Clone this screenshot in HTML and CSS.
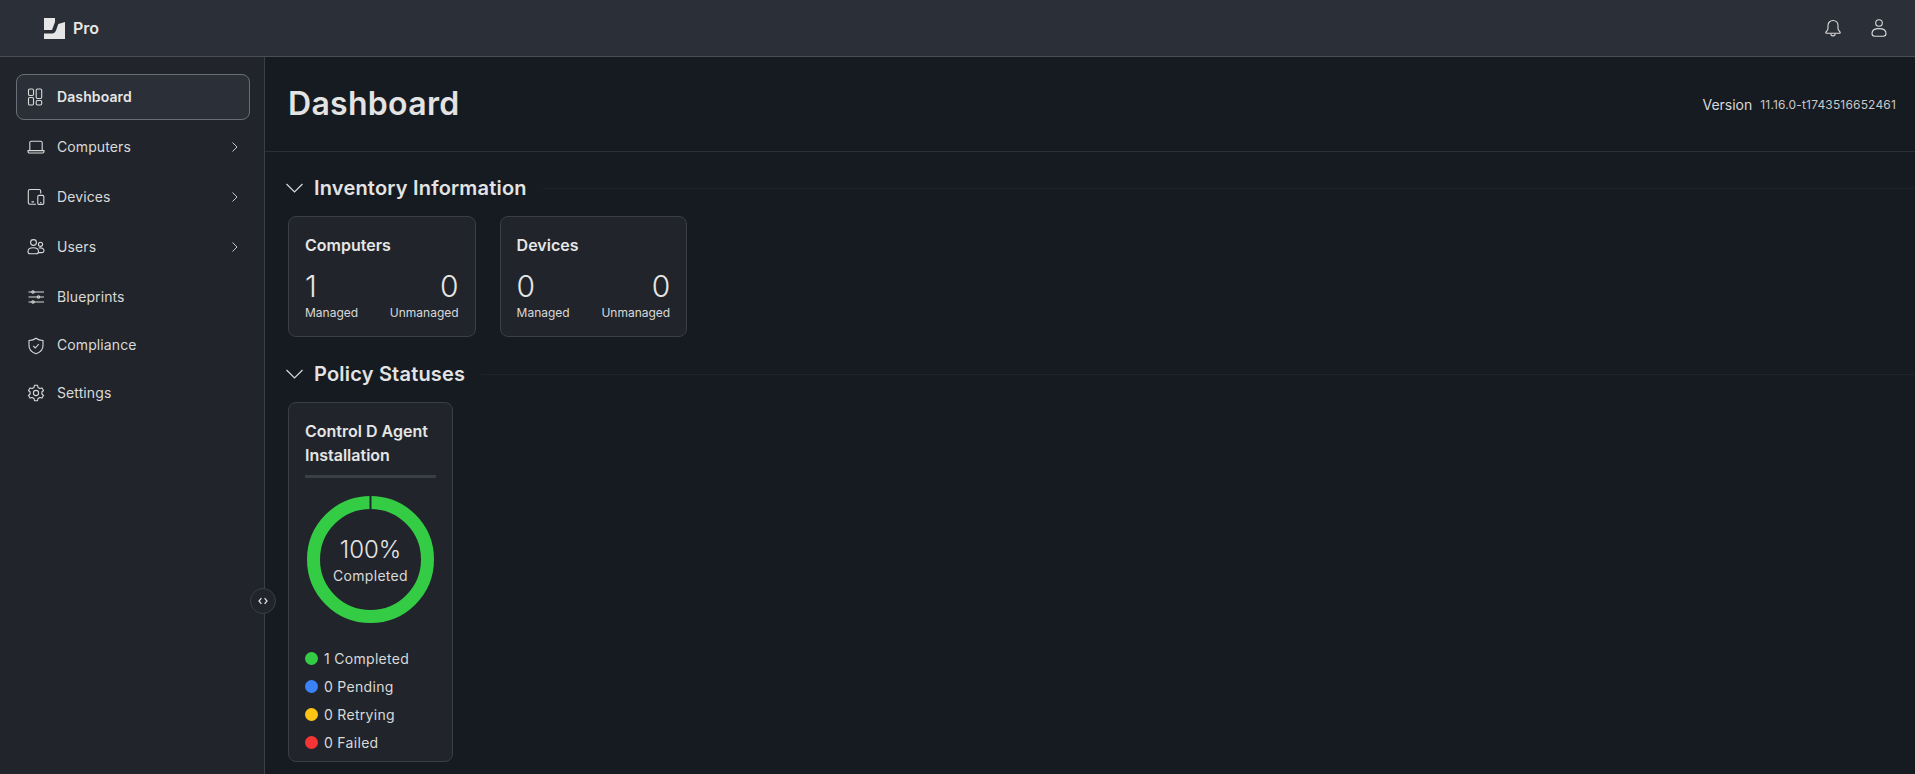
FILE: index.html
```html
<!DOCTYPE html>
<html lang="en">
<head>
    <meta charset="UTF-8">
    <meta name="viewport" content="width=device-width, initial-scale=1.0">
    <title>Dashboard</title>
    <link rel="stylesheet" href="styles.css">
</head>
<body>
    <header class="topbar">
        <div class="brand">
            <svg class="brand-logo" viewBox="0 0 21 21">
                <path d="M0 0H11V4L8 12H0Z" fill="#e6e6e6"/>
                <path d="M21 4V21H0V15.5H8C10 15.5 11 14.5 12 12.5L14.3 6Z" fill="#e6e6e6"/>
            </svg>
            <span>Pro</span>
        </div>
        <div class="topbar-actions">
            <svg class="icon" viewBox="0 0 20 20"><path d="M10 2.5C7 2.5 5 4.8 5 7.6V10.5C5 12.3 3.2 13.2 2.8 14.4 2.7 15 3 15.3 3.6 15.3H16.4C17 15.3 17.3 15 17.2 14.4 16.8 13.2 15 12.3 15 10.5V7.6C15 4.8 13 2.5 10 2.5Z"/><path d="M7.8 15.5C7.8 17 8.8 17.9 10 17.9S12.2 17 12.2 15.5"/></svg>
            <svg class="icon" viewBox="0 0 20 20"><circle cx="10" cy="5" r="3.3"/><path d="M3 15.5C3 12.2 6 10.6 10 10.6S17 12.2 17 15.5C17 17.2 16 18.2 14.3 18.2H5.7C4 18.2 3 17.2 3 15.5Z"/></svg>
        </div>
    </header>
    <div class="layout">
        <aside class="sidebar">
            <nav class="nav">
                <a class="nav-item active">
                    <svg class="icon" viewBox="0 0 18 18"><rect x="1.5" y="1" width="5" height="6.5" rx="1.2"/><rect x="1.5" y="9.5" width="5" height="7.5" rx="1.2"/><rect x="9.2" y="1" width="5.5" height="9.5" rx="1.2"/><rect x="9.2" y="12.5" width="5.5" height="4.5" rx="1.2"/></svg>
                    <span>Dashboard</span>
                </a>
                <a class="nav-item">
                    <svg class="icon" viewBox="0 0 18 18"><path d="M2.8 12.5V4.8C2.8 3.9 3.4 3.3 4.3 3.3H13.7C14.6 3.3 15.2 3.9 15.2 4.8V12.5"/><path d="M1 12.6H17V13.6C17 14.4 16.4 15 15.6 15H2.4C1.6 15 1 14.4 1 13.6Z"/></svg>
                    <span>Computers</span>
                    <svg class="chevron" viewBox="0 0 8 12"><path d="M1.5 1.5L6 6L1.5 10.5"/></svg>
                </a>
                <a class="nav-item">
                    <svg class="icon" viewBox="0 0 18 18"><path d="M9 16.2H3C2 16.2 1.3 15.5 1.3 14.5V3.2C1.3 2.2 2 1.5 3 1.5H12C13 1.5 13.7 2.2 13.7 3.2V5.5"/><rect x="10.8" y="7.4" width="6" height="9" rx="1.2"/><path d="M13.2 14.6H14.4M4.5 13.9H7"/></svg>
                    <span>Devices</span>
                    <svg class="chevron" viewBox="0 0 8 12"><path d="M1.5 1.5L6 6L1.5 10.5"/></svg>
                </a>
                <a class="nav-item">
                    <svg class="icon" viewBox="0 0 18 18"><circle cx="6.5" cy="4.5" r="2.9"/><circle cx="13.5" cy="6.3" r="2.1"/><path d="M1 13.5C1 11 3.2 9.8 6.2 9.8S11.5 11 11.5 13.5C11.5 15 10.6 15.8 9.2 15.8H3.2C1.8 15.8 1 15 1 13.5Z"/><path d="M11.8 10C14.6 9.5 17 10.5 17 12.8C17 13.9 16.3 14.6 15.2 14.6H11.6"/></svg>
                    <span>Users</span>
                    <svg class="chevron" viewBox="0 0 8 12"><path d="M1.5 1.5L6 6L1.5 10.5"/></svg>
                </a>
                <a class="nav-item">
                    <svg class="icon" viewBox="0 0 18 18"><path d="M1.5 4H17M1.5 9H17M1.5 14H17"/><circle cx="6" cy="4" r="1.2"/><circle cx="11.5" cy="9" r="1.2"/><circle cx="6" cy="14" r="1.2"/></svg>
                    <span>Blueprints</span>
                </a>
                <a class="nav-item short">
                    <svg class="icon" viewBox="0 0 18 18"><path d="M9 1.2C11 2.8 13.2 3.4 16 3.5V8.5C16 12.5 13 15.5 9 16.8C5 15.5 2 12.5 2 8.5V3.5C4.8 3.4 7 2.8 9 1.2Z"/><path d="M6.3 9L8.3 11L11.8 7"/></svg>
                    <span>Compliance</span>
                </a>
                <a class="nav-item short">
                    <svg class="icon" viewBox="0 0 18 18"><circle cx="9" cy="9" r="2.6"/><path d="M7.5 1.3H10.5L11 3.5 12.9 4.6 15 3.9 16.5 6.5 14.9 8V10L16.5 11.5 15 14.1 12.9 13.4 11 14.5 10.5 16.7H7.5L7 14.5 5.1 13.4 3 14.1 1.5 11.5 3.1 10V8L1.5 6.5 3 3.9 5.1 4.6 7 3.5Z" stroke-linejoin="round"/></svg>
                    <span>Settings</span>
                </a>
            </nav>
            <button class="collapse-btn">
                <svg viewBox="0 0 12 10"><path d="M4 1.5L1 5L4 8.5M8 1.5L11 5L8 8.5"/></svg>
            </button>
        </aside>
        <main class="content">
            <div class="page-head">
                <h1>Dashboard</h1>
                <div class="version"><span>Version</span><small>11.16.0-t1743516652461</small></div>
            </div>
            <section class="section">
                <div class="section-head">
                    <svg class="section-toggle" viewBox="0 0 18 10"><path d="M0.5 1L8.5 9L16.5 1"/></svg>
                    <h2>Inventory Information</h2>
                    <div class="section-line"></div>
                </div>
                <div class="cards">
                    <div class="card stat-card">
                        <h3>Computers</h3>
                        <div class="stat-row">
                            <div class="stat"><b>1</b><span>Managed</span></div>
                            <div class="stat right"><b>0</b><span>Unmanaged</span></div>
                        </div>
                    </div>
                    <div class="card stat-card">
                        <h3>Devices</h3>
                        <div class="stat-row">
                            <div class="stat"><b>0</b><span>Managed</span></div>
                            <div class="stat right"><b>0</b><span>Unmanaged</span></div>
                        </div>
                    </div>
                </div>
            </section>
            <section class="section">
                <div class="section-head">
                    <svg class="section-toggle" viewBox="0 0 18 10"><path d="M0.5 1L8.5 9L16.5 1"/></svg>
                    <h2>Policy Statuses</h2>
                    <div class="section-line"></div>
                </div>
                <div class="card policy-card">
                    <h3>Control D Agent Installation</h3>
                    <div class="progress-bar"></div>
                    <div class="donut">
                        <svg viewBox="0 0 127 127">
                            <circle cx="63.5" cy="63.5" r="57" fill="none" stroke="#34cc45" stroke-width="13"/>
                            <rect x="62.5" y="0" width="2" height="13" fill="#21252b"/>
                        </svg>
                        <div class="donut-label"><b>100%</b><span>Completed</span></div>
                    </div>
                    <ul class="legend">
                        <li><i class="dot green"></i>1 Completed</li>
                        <li><i class="dot blue"></i>0 Pending</li>
                        <li><i class="dot yellow"></i>0 Retrying</li>
                        <li><i class="dot red"></i>0 Failed</li>
                    </ul>
                </div>
            </section>
        </main>
    </div>
</body>
</html>
```
FILE: styles.css
```css
* {
    box-sizing: border-box;
}
html, body {
    height: 100%;
}
body {
    margin: 0;
    height: 774px;
    overflow: hidden;
    font-family: Inter, "Noto Sans", sans-serif;
    background-color: #161a21;
    color: #e6e6e6;
    font-size: 14px;
}
svg {
    display: block;
}
.icon {
    width: 18px;
    height: 18px;
    flex-shrink: 0;
    fill: none;
    stroke: #d9d9d9;
    stroke-width: 1.1;
}
.topbar {
    height: 57px;
    display: flex;
    align-items: center;
    justify-content: space-between;
    background: #2b3038;
    border-bottom: 1px solid #494d54;
    padding: 0 26px 0 44px;
}
.brand {
    display: flex;
    align-items: center;
    gap: 8px;
    font-size: 16px;
    font-weight: 600;
}
.brand-logo {
    width: 21px;
    height: 21px;
}
.topbar-actions {
    display: flex;
    align-items: center;
    gap: 26px;
}
.topbar-actions .icon {
    width: 20px;
    height: 20px;
}
.layout {
    display: flex;
    height: 717px;
}
.sidebar {
    position: relative;
    width: 265px;
    flex-shrink: 0;
    background: #21252b;
    border-right: 1px solid #3a3e45;
    padding: 17px 14px 0 16px;
}
.nav {
    display: flex;
    flex-direction: column;
    gap: 4px;
}
.nav-item {
    height: 46px;
    display: flex;
    align-items: center;
    gap: 12px;
    padding: 0 10px;
    border: 1px solid transparent;
    border-radius: 8px;
    color: #d9d9d9;
    letter-spacing: 0.1px;
}
.nav-item span {
    padding-bottom: 2px;
}
.nav-item.short {
    height: 44px;
    margin-top: -0.5px;
}
.nav-item.active {
    background: #2b3038;
    border-color: #6b6f75;
    font-weight: 600;
    color: #e6e6e6;
}
.chevron {
    width: 8px;
    height: 12px;
    margin-left: auto;
    fill: none;
    stroke: #c8c8c8;
    stroke-width: 1;
}
.collapse-btn {
    position: absolute;
    top: 531px;
    right: -12px;
    width: 26px;
    height: 26px;
    padding: 0;
    display: flex;
    align-items: center;
    justify-content: center;
    background: #21252b;
    border: 1px solid #3a3e45;
    border-radius: 50%;
}
.collapse-btn svg {
    width: 10px;
    height: 8px;
    fill: none;
    stroke: #e6e6e6;
    stroke-width: 1.5;
}
.content {
    flex: 1;
    min-width: 0;
}
.page-head {
    height: 95px;
    display: flex;
    align-items: center;
    justify-content: space-between;
    padding: 0 19px 0 23px;
    border-bottom: 1px solid #2b3038;
}
h1 {
    margin: 0 0 2px;
    font-size: 32px;
    font-weight: 600;
    letter-spacing: 0.3px;
    color: #e3e3e3;
}
.version {
    display: flex;
    align-items: center;
    gap: 8px;
    color: #d9d9d9;
}
.version small {
    font-size: 12px;
    color: #c8c8c8;
    letter-spacing: 0.17px;
}
.section {
    padding-left: 21px;
}
.section + .section {
    margin-top: 1px;
}
.section-head {
    height: 64px;
    display: flex;
    align-items: center;
    padding-top: 8px;
}
.section-toggle {
    width: 18px;
    height: 10px;
    margin-right: 10px;
    fill: none;
    stroke: #d9d9d9;
    stroke-width: 1.2;
}
h2 {
    margin: 0;
    font-size: 20px;
    font-weight: 600;
    letter-spacing: 0.2px;
    color: #e3e3e3;
}
.section-line {
    flex: 1;
    height: 1px;
    margin-left: 16px;
    background: #1f2329;
}
.cards {
    display: flex;
    gap: 24px;
    padding: 0 0 0 2px;
}
.card {
    background: #21252b;
    border: 1px solid #3a3e45;
    border-radius: 8px;
    padding: 16px;
}
h3 {
    margin: 0;
    font-size: 16px;
    font-weight: 600;
    line-height: 24px;
}
.stat-card {
    width: 187.6px;
    height: 121px;
}
.stat-row {
    display: flex;
    justify-content: space-between;
    margin-top: 11px;
}
.stat b {
    display: block;
    font-size: 30px;
    font-weight: 300;
    line-height: 36px;
}
.stat span {
    display: block;
    font-size: 12px;
    line-height: 18px;
    color: #d9d9d9;
}
.stat.right {
    text-align: right;
}
.policy-card {
    width: 165px;
    height: 360px;
    margin: 0 0 0 2px;
}
.progress-bar {
    height: 3px;
    margin-top: 8px;
    background: #3a3e45;
}
.donut {
    position: relative;
    width: 127px;
    height: 127px;
    margin: 18px 0 0 2px;
}
.donut-label {
    position: absolute;
    inset: 0;
    padding-top: 2px;
    display: flex;
    flex-direction: column;
    align-items: center;
    justify-content: center;
}
.donut-label b {
    font-size: 24px;
    font-weight: 300;
    line-height: 30px;
}
.donut-label span {
    line-height: 22px;
    color: #d9d9d9;
    letter-spacing: 0.3px;
}
.legend {
    list-style: none;
    margin: 21px 0 0;
    padding: 0;
}
.legend li {
    height: 28px;
    display: flex;
    align-items: center;
    gap: 6px;
    color: #d9d9d9;
    letter-spacing: 0.3px;
}
.dot {
    width: 13px;
    height: 13px;
    border-radius: 50%;
}
.green { background: #34cc45; }
.blue { background: #3b82f6; }
.yellow { background: #fdc416; }
.red { background: #f53535; }
```
